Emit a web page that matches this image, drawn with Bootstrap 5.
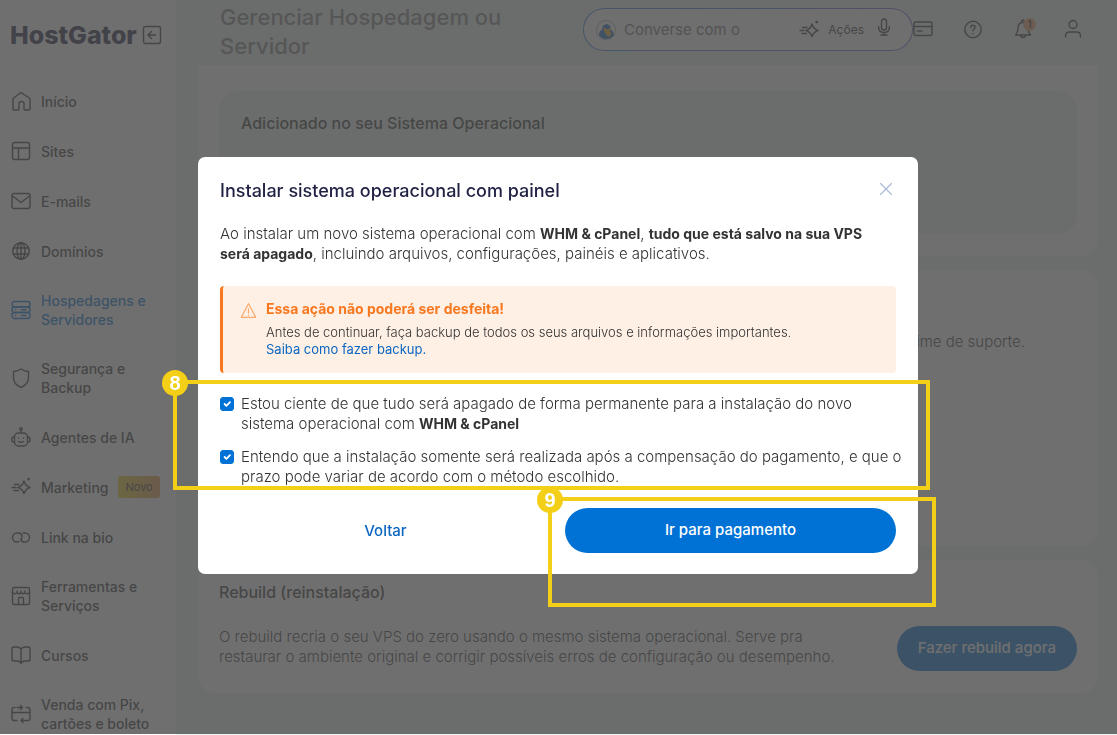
<!DOCTYPE html>
<html lang="pt-BR">
<head>
<meta charset="utf-8">
<meta name="viewport" content="width=device-width, initial-scale=1">
<title>Gerenciar Hospedagem ou Servidor</title>
<link href="https://cdn.jsdelivr.net/npm/bootstrap@5.3.0/dist/css/bootstrap.min.css" rel="stylesheet">
<style>
  :root { --ink: #333; --brand: #0072d6; --navy: #1f2044; --orange: #f87820; --mark-yellow: #f3d017; }
  body { font-family: Inter, "Liberation Sans", sans-serif; font-size: 15px; font-weight: 300; line-height: 20px; color: var(--ink); background: #ecf5f0; height: 100vh; overflow: hidden; }
  a { text-decoration: none; }
  b { font-size: 14px; font-weight: 700; }
  .ico { width: 20px; height: 20px; flex: none; fill: none; stroke: currentColor; stroke-width: 1.4; stroke-linecap: round; stroke-linejoin: round; }
  .icon-btn { padding: 0; border: 0; background: none; color: inherit; display: flex; }

  /* side menu */
  .side { width: 176px; flex: none; background: #fff; padding: 22px 10px 0; overflow: hidden; }
  .logo-text { font-size: 25px; line-height: 26px; font-weight: 800; color: var(--navy); }
  .side-menu { gap: 30px; margin-top: 43px; padding-left: 1px; }
  .side-menu a { color: var(--ink); font-size: 14px; font-weight: 500; line-height: 19px; gap: 10px; white-space: nowrap; }
  .side-menu a.active { color: var(--brand); }
  .tag-new { font-size: 11px; font-weight: 400; line-height: 22px; padding: 0 7px; border-radius: 3px; background: linear-gradient(90deg, #e8d020, #e89a4a); margin: -1px 0; }

  /* top bar */
  .top { height: 65px; padding: 3px 34px 0 44px; }
  .top h1 { font-size: 22px; line-height: 29px; font-weight: 500; color: #808080; flex: 0 0 363px; }
  .chat { height: 43px; margin-top: 5px; border: 1px solid transparent; border-radius: 22px; background: linear-gradient(#fff, #fff) padding-box, linear-gradient(90deg, #2f80e0, #6c63d8) border-box; padding: 0 18px 0 12px; min-width: 0; }
  .chat input { border: 0; background: none; outline: 0; min-width: 0; width: 100%; padding: 0; }
  .chat input::placeholder { color: #707070; opacity: 1; }
  .avatar { width: 20px; height: 20px; stroke: none; }
  .actions { font-size: 12px; font-weight: 400; gap: 9px; margin-right: 10px; }
  .tools { gap: 30px; margin-top: 16px; }
  .bell-count { position: absolute; left: 10px; top: -1px; width: 13px; height: 13px; border-radius: 50%; background: #f5a070; font-size: 10px; font-weight: 600; line-height: 13px; text-align: center; }

  /* content panels */
  .panels { padding: 0 19px 0 22px; gap: 14px; }
  .panel { background: #fff; border-radius: 18px; padding: 22px 21px; }
  .panel h2 { font-size: 16px; line-height: 20px; font-weight: 500; margin: 0; }
  .panel-first { border-radius: 0 0 18px 18px; padding-top: 26px; }
  .inset-box { background: #ecf5f0; border-radius: 18px; height: 143px; padding: 22px; }
  .panel-support { height: 276px; padding: 62px 73px 0 21px; }
  .btn-pill { height: 45px; border-radius: 23px; background: var(--brand); color: #fff; font-size: 15px; font-weight: 500; border: 0; padding: 0 21px; }
  .btn-pill:hover { background: #0060b8; color: #fff; }

  /* dialog */
  .shade { position: fixed; inset: 0 0 1px; background: rgba(75, 75, 75, .8); }
  .modal { padding: 0 1px 4px 0; }
  .modal-dialog { max-width: 720px; }
  .modal-content { border: 0; border-radius: 7px; padding: 22px 22px 21px; color: var(--ink); }
  .modal-title { font-size: 18px; line-height: 24px; font-weight: 500; color: var(--navy); }
  .close-x { color: #a9b8d6; }
  .close-x .ico { stroke-width: 1.1; }
  .lead-text { margin: 21px 0 22px; }
  .warn { background: #fff0e6; border-left: 3px solid var(--orange); border-radius: 4px; padding: 13px 18px 15px 17px; gap: 9px; margin-bottom: 21px; font-size: 13px; line-height: 17px; }
  .warn strong { color: var(--orange); font-size: 14px; font-weight: 700; line-height: 20px; margin-bottom: 5px; }
  .warn .ico { color: #fba868; width: 17px; height: 17px; margin-top: 3px; }
  .warn a, .link-back { color: #0a66c2; font-weight: 400; }
  .checks { position: relative; gap: 13px; margin-bottom: 21px; }
  .checks .form-check { padding: 0; margin: 0; min-height: 0; gap: 7px; }
  .checks .form-check-input { width: 14px; height: 14px; margin: 3px 0 0; float: none; flex: none; border-radius: 3px; }
  .form-check-input:checked { background-color: var(--brand); border-color: var(--brand); }
  .checks label { white-space: nowrap; }
  .link-back { font-weight: 500; background: none; border: 0; height: 45px; }
  .dialog-actions { column-gap: 14px; }

  /* numbered callouts */
  .callout { position: absolute; border: 4px solid var(--mark-yellow); pointer-events: none; z-index: 2; }
  .callout span { position: absolute; left: -15px; top: -14px; width: 26px; height: 26px; border-radius: 50%; background: var(--mark-yellow); color: #fff; font: bold 20px/26px "Liberation Sans", sans-serif; text-align: center; }
  .callout-checks { inset: -14px -34px -3px -47px; }
  .callout-pay { inset: -11px -40px -54px -17px; }
</style>
</head>
<body>
<div class="d-flex h-100">
  <aside class="side">
    <div class="d-flex align-items-center justify-content-between pe-1">
      <a href="#" class="logo-text">HostGator</a>
      <button class="icon-btn" aria-label="Recolher menu"><svg class="ico" viewBox="0 0 20 20"><rect x="1.500" y="1.500" width="17" height="17" rx="2"/><path d="M13.500 10h-7M9.500 6.500 6 10l3.500 3.500"/></svg></button>
    </div>
    <nav class="side-menu d-flex flex-column">
      <a href="#" class="d-flex align-items-center"><svg class="ico" viewBox="0 0 20 20"><path d="M2 7.500 10 1.500l9 6V18q0 1-1 1h-4q-1 0-1-1v-5.500q0-2-2.500-2T8 12.500V18q0 1-1 1H3q-1 0-1-1z"/></svg>Início</a>
      <a href="#" class="d-flex align-items-center"><svg class="ico" viewBox="0 0 20 20"><rect x="1.500" y="1.500" width="17" height="17" rx="2"/><path d="M1.500 7h17M7.500 7v11.500"/></svg>Sites</a>
      <a href="#" class="d-flex align-items-center"><svg class="ico" viewBox="0 0 20 20"><rect x="1" y="2.500" width="18" height="15" rx="2"/><path d="m1.500 5 8.500 6.500L18.500 5"/></svg>E-mails</a>
      <a href="#" class="d-flex align-items-center"><svg class="ico" viewBox="0 0 20 20"><circle cx="10" cy="10" r="8.200"/><ellipse cx="10" cy="10" rx="4" ry="8.200"/><path d="M2.500 7h15M2.500 13h15M10 2v16"/></svg>Domínios</a>
      <a href="#" class="d-flex align-items-center active"><svg class="ico" viewBox="0 0 20 20"><rect x="1" y="1.500" width="18" height="5.500" rx="2.500"/><rect x="1" y="7" width="18" height="5.500" rx="2.500"/><rect x="1" y="12.500" width="18" height="6" rx="2.500"/><path d="M4.500 9.700h.2M10.500 9.700h4.500M4.500 15.500h.2M10.500 15.500h4.500"/></svg><span>Hospedagens e<br>Servidores</span></a>
      <a href="#" class="d-flex align-items-center"><svg class="ico" viewBox="0 0 20 20"><path d="M10 1q4 2.500 7.500 2.500V10q0 6-7.500 9.500Q2.500 16 2.500 10V3.500Q6 3.500 10 1z"/></svg><span>Segurança e<br>Backup</span></a>
      <a href="#" class="d-flex align-items-center"><svg class="ico" viewBox="0 0 20 20"><circle cx="10" cy="2" r="1.300"/><path d="M10 3.500V6M3.500 10H2.500Q1 10 1 12v1q0 2 1.500 2h1M16.500 10h1q1.500 0 1.500 2v1q0 2-1.500 2h-1M7.500 14.500q2.500 1.500 5 0M7.500 11v.2M12.500 11v.2"/><rect x="3.500" y="6" width="13" height="13" rx="4"/></svg>Agentes de IA</a>
      <a href="#" class="d-flex align-items-center"><svg class="ico" viewBox="0 0 20 20"><path d="M13 4q1.500 5 6 6.500-4.500 1.500-6 6-1.500-4.500-6-6Q11.500 9 13 4zM3.500 7.500H8M1 10.500h4M3 13.500h4.500"/><path d="m17.500 2 .2.200" stroke-width="2.500"/></svg><span>Marketing</span><span class="tag-new">Novo</span></a>
      <a href="#" class="d-flex align-items-center"><svg class="ico" viewBox="0 0 20 20"><path d="M8 14.500Q7.500 15 6 15A4.500 4.500 0 0 1 6 6h2q3 .5 3 4 0 1.500-1 2.500"/><path d="M12 6h2a4.500 4.500 0 0 1 0 9h-1.500q-2.500-.5-2.500-3"/></svg>Link na bio</a>
      <a href="#" class="d-flex align-items-center"><svg class="ico" viewBox="0 0 20 20"><rect x="1.500" y="1.500" width="17" height="17" rx="1.500"/><path d="M1.500 6.500q3 2.500 4.500 0 2 2.500 4 0 2 2.500 4 0 1.500 2.500 4.500 0M6 5v1.500M10 5v1.500M14 5v1.500M7.500 18.500v-6q0-1 1-1h3q1 0 1 1v6"/></svg><span>Ferramentas e<br>Serviços</span></a>
      <a href="#" class="d-flex align-items-center"><svg class="ico" viewBox="0 0 20 20"><path d="M10 4.500Q9 2 6 2H3Q1 2 1 3.500V14q0 2 2 2h3.500q2.500 0 3.500 2.500 1-2.500 3.500-2.500H17q2 0 2-2V3.500Q19 2 17 2h-3q-3 0-4 2.500zm0 0v14"/></svg>Cursos</a>
      <a href="#" class="d-flex align-items-center"><svg class="ico" viewBox="0 0 20 20"><path d="M4 3.500H3q-2 0-2 2v9q0 2 2 2h3M15 3.500h2q2 0 2 2v9q0 2-2 2h-7M1 8.500h18M6 3.500h5M9.500 1.500l2 2-2 2M12 14.500l-2 2 2 2"/></svg><span>Venda com Pix,<br>cartões e boleto</span></a>
    </nav>
  </aside>

  <main class="flex-grow-1 overflow-hidden">
    <header class="top d-flex align-items-start">
      <h1 class="m-0">Gerenciar Hospedagem ou<br>Servidor</h1>
      <div class="chat d-flex align-items-center flex-grow-1">
        <svg class="ico avatar me-2" viewBox="0 0 20 20"><circle cx="10" cy="10" r="9.500" fill="#fff" stroke="#ccc"/><path d="M3 15q0-4 3-5 0-6 5-6 4 1 3.500 5 3.500 3 3.500 6-3 4-8 4-5 0-7-4z" fill="#1768c0"/><path d="m7 7 4 2.500L15 8l-1 4 2 1-3 4q-2-.5-4-4z" fill="#ffb020"/></svg>
        <input type="text" placeholder="Converse com o" aria-label="Converse com o assistente">
        <button class="icon-btn align-items-center actions"><svg class="ico" viewBox="0 0 20 20"><path d="M13 4q1.500 5 6 6.500-4.500 1.500-6 6-1.500-4.500-6-6Q11.500 9 13 4zM3.500 7.500H8M1 10.500h4M3 13.500h4.500"/><path d="m17.500 2 .2.200" stroke-width="2.500"/></svg>Ações</button>
        <button class="icon-btn mb-1" aria-label="Falar"><svg class="ico" viewBox="0 0 20 20"><rect x="7.500" y="1" width="5" height="11" rx="2.500"/><path d="M4.500 8.500q0 6 5.500 6t5.500-6M10 14.500V17M7 17h6"/></svg></button>
      </div>
      <div class="tools d-flex">
        <button class="icon-btn" aria-label="Pagamentos"><svg class="ico" viewBox="0 0 20 20"><rect x="1" y="3" width="18" height="13.500" rx="1.500"/><path d="M1 7.500h18M4.500 12H9"/></svg></button>
        <button class="icon-btn" aria-label="Ajuda"><svg class="ico" viewBox="0 0 20 20"><circle cx="10" cy="10.500" r="8.200"/><path d="M7.800 8.500q0-2.200 2.200-2.200t2.200 2q0 1-1.200 1.700-1 .6-1 1.800M10 14.500v.2"/></svg></button>
        <button class="icon-btn position-relative" aria-label="Notificações"><svg class="ico" viewBox="0 0 20 20"><path d="M2.500 16h15q-2.500-2.500-2.500-7 0-5.500-5-5.500T5 9q0 4.500-2.500 7zM7.500 16.500q.5 2 2.500 2t2.500-2M8.500 3.500q0-2.500 1.500-2.500t1.500 2.500"/></svg><span class="bell-count">1</span></button>
        <button class="icon-btn" aria-label="Conta"><svg class="ico" viewBox="0 0 20 20"><circle cx="10" cy="5.500" r="4"/><path d="M2.500 18v-1q0-4 4-4h7q4 0 4 4v1"/></svg></button>
      </div>
    </header>

    <div class="panels d-flex flex-column">
      <section class="panel panel-first">
        <div class="inset-box"><h2>Adicionado no seu Sistema Operacional</h2></div>
      </section>
      <section class="panel panel-support text-end">regime de suporte.</section>
      <section class="panel">
        <h2>Rebuild (reinstalação)</h2>
        <div class="d-flex align-items-center justify-content-between mt-4">
          <p class="m-0 pb-1">O rebuild recria o seu VPS do zero usando o mesmo sistema operacional. Serve pra<br>restaurar o ambiente original e corrigir possíveis erros de configuração ou desempenho.</p>
          <button class="btn btn-pill">Fazer rebuild agora</button>
        </div>
      </section>
    </div>
  </main>
</div>

<div class="shade"></div>

<div class="modal d-block" role="dialog" aria-modal="true" aria-labelledby="dlg-title">
  <div class="modal-dialog modal-dialog-centered my-0 h-100">
    <div class="modal-content">
      <div class="d-flex align-items-center justify-content-between">
        <h2 class="modal-title" id="dlg-title">Instalar sistema operacional com painel</h2>
        <button class="icon-btn close-x" aria-label="Fechar"><svg class="ico" viewBox="0 0 20 20"><path d="m4.500 2.500 11 11M15.500 2.500l-11 11"/></svg></button>
      </div>
      <p class="lead-text">Ao instalar um novo sistema operacional com <b>WHM &amp; cPanel</b>, <b>tudo que está salvo na sua VPS<br>será apagado</b>, incluindo arquivos, configurações, painéis e aplicativos.</p>
      <div class="warn d-flex" role="alert">
        <svg class="ico" viewBox="0 0 20 20"><path d="M10 2 1.500 18h17zM10 8v5M10 15.500v.2"/></svg>
        <div><strong class="d-block">Essa ação não poderá ser desfeita!</strong>Antes de continuar, faça backup de todos os seus arquivos e informações importantes.<br><a href="#">Saiba como fazer backup.</a></div>
      </div>
      <div class="checks d-flex flex-column">
        <div class="form-check d-flex">
          <input class="form-check-input" type="checkbox" id="ack-erase" checked>
          <label for="ack-erase">Estou ciente de que tudo será apagado de forma permanente para a instalação do novo<br>sistema operacional com <b>WHM &amp; cPanel</b></label>
        </div>
        <div class="form-check d-flex">
          <input class="form-check-input" type="checkbox" id="ack-time" checked>
          <label for="ack-time">Entendo que a instalação somente será realizada após a compensação do pagamento, e que o<br>prazo pode variar de acordo com o método escolhido.</label>
        </div>
        <div class="callout callout-checks"><span>8</span></div>
      </div>
      <div class="row g-0 dialog-actions">
        <div class="col"><button class="link-back w-100">Voltar</button></div>
        <div class="col position-relative">
          <button class="btn btn-pill w-100">Ir para pagamento</button>
          <div class="callout callout-pay"><span>9</span></div>
        </div>
      </div>
    </div>
  </div>
</div>
<script src="https://cdn.jsdelivr.net/npm/bootstrap@5.3.0/dist/js/bootstrap.bundle.min.js"></script>
</body>
</html>
